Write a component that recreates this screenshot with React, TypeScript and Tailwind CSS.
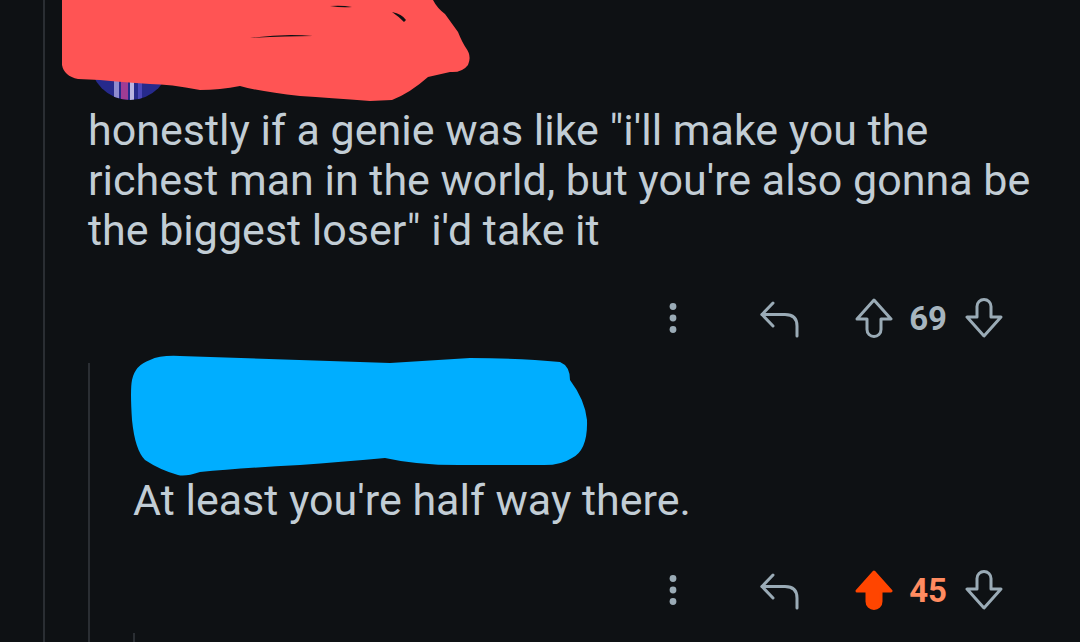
import React from "react";

const DotsIcon = () => (
  <svg width="8" height="30" viewBox="0 0 8 30" className="shrink-0">
    <circle cx="4" cy="3.5" r="3.4" fill="#9aabb6" />
    <circle cx="4" cy="15" r="3.4" fill="#9aabb6" />
    <circle cx="4" cy="26.5" r="3.4" fill="#9aabb6" />
  </svg>
);

const ReplyIcon = () => (
  <svg width="40" height="40" viewBox="0 0 40 40" fill="none" className="shrink-0">
    <path
      d="M14 5 L3 16.5 L14 28"
      stroke="#9aabb6"
      strokeWidth="3"
      strokeLinecap="round"
      strokeLinejoin="round"
    />
    <path
      d="M3 16.5 H26 Q38 16.5 38 28 V38"
      stroke="#9aabb6"
      strokeWidth="3"
      strokeLinecap="round"
      strokeLinejoin="round"
    />
  </svg>
);

const arrowPath = "M19 2 L36 21 L26 21 L26 31.5 A7 7 0 0 1 12 31.5 L12 21 L2 21 Z";

const UpIcon = ({ active }: { active?: boolean }) => (
  <svg width="38" height="40" viewBox="0 0 38 40" className="shrink-0">
    <path
      d={arrowPath}
      fill={active ? "#ff4500" : "none"}
      stroke={active ? "#ff4500" : "#9aabb6"}
      strokeWidth="3"
      strokeLinejoin="round"
    />
  </svg>
);

const DownIcon = () => (
  <svg width="38" height="40" viewBox="0 0 38 40" className="shrink-0 rotate-180">
    <path d={arrowPath} fill="none" stroke="#9aabb6" strokeWidth="3" strokeLinejoin="round" />
  </svg>
);

const Actions = ({ score, upvoted }: { score: number; upvoted?: boolean }) => (
  <div className="flex h-[40px] items-center justify-end pr-[77px]">
    <DotsIcon />
    <div className="ml-[82px]">
      <ReplyIcon />
    </div>
    <div className="ml-[56px]">
      <UpIcon active={upvoted} />
    </div>
    <span
      className={`ml-[16px] text-[33px] font-bold leading-none ${
        upvoted ? "text-[#ff8b60]" : "text-[#a7b5bf]"
      }`}
    >
      {score}
    </span>
    <div className="ml-[18px]">
      <DownIcon />
    </div>
  </div>
);

export default function App() {
  return (
    <div className="h-[642px] w-[1080px] overflow-hidden bg-[#0e1114] pl-[43px] font-['Roboto',sans-serif] text-[#c2cdd5]">
      <div className="h-full border-l-2 border-[#2a2e33] pl-[43px]">
        {/* top comment header (scribbled out) */}
        <div className="relative h-[105px] pl-[2px] pt-[20px]">
          <svg width="80" height="80" viewBox="0 0 80 80">
            <defs>
              <clipPath id="av1">
                <circle cx="40" cy="40" r="40" />
              </clipPath>
            </defs>
            <g clipPath="url(#av1)">
              <rect width="80" height="80" fill="#262a8c" />
              <rect x="24" y="0" width="5" height="80" fill="#8f8ccf" />
              <rect x="31" y="0" width="7" height="80" fill="#a03c94" />
              <rect x="40" y="0" width="4" height="80" fill="#b9b4e0" />
              <rect x="48" y="0" width="4" height="80" fill="#4a46b8" />
            </g>
          </svg>
          <svg
            className="absolute left-[-30px] top-0"
            width="420"
            height="110"
            viewBox="58 0 420 110"
          >
            <path
              d="M62 0 L433 0 Q437 8 445 14 L458 32 Q462 42 466 48 Q472 56 468 65 Q462 73 450 72 L428 77 Q410 93 392 100 L370 101 Q330 98 300 96 Q262 92 240 86 Q220 90 200 90 Q170 84 150 84 Q120 82 100 80 L78 79 Q64 76 62 65 Z"
              fill="#ff5454"
            />
            <path d="M330 6 Q342 5 352 7 Q342 8 330 6 Z" fill="#0e1114" />
            <path d="M392 12 Q402 14 406 20 L404 22 Q398 16 392 12 Z" fill="#0e1114" />
            <path d="M250 38 Q285 33 313 36 Q285 36 250 38 Z" fill="#0e1114" />
          </svg>
        </div>

        <p className="w-[965px] text-[43px] leading-[50px]">
          honestly if a genie was like "i'll make you the richest man in the world, but you're
          also gonna be the biggest loser" i'd take it
        </p>

        <div className="mt-[43px]">
          <Actions score={69} />
        </div>

        {/* reply */}
        <div className="mt-[25px] border-l-2 border-[#2a2e33] pl-[43px]">
          <div className="relative h-[112px]">
            <svg
              className="absolute left-[-13px] top-[-8px]"
              width="480"
              height="125"
              viewBox="120 355 480 125"
            >
              <circle cx="178" cy="424" r="40" fill="#1c1e22" />
              <path d="M152 446 L160 452 L158 456 Z" fill="#d9a441" />
              <path d="M160 450 L172 455 L168 460 Z" fill="#cfd3d8" />
              <path
                d="M150 360 Q160 355 180 356 L390 363 L470 358 Q520 358 560 362 Q570 366 570 380 Q585 400 587 420 Q588 450 572 458 Q560 466 540 465 L470 465 Q420 466 385 458 Q340 462 300 465 Q240 468 200 472 Q185 477 178 475 Q160 470 145 460 Q135 450 132 420 Q130 390 132 380 Q135 365 150 360 Z"
                fill="#00aeff"
              />
            </svg>
          </div>

          <p className="text-[43px] leading-[50px]">At least you're half way there.</p>

          <div className="mt-[45px]">
            <Actions score={45} upvoted />
          </div>

          <div className="mt-[23px] h-[40px] border-l-2 border-[#2a2e33]" />
        </div>
      </div>
    </div>
  );
}
